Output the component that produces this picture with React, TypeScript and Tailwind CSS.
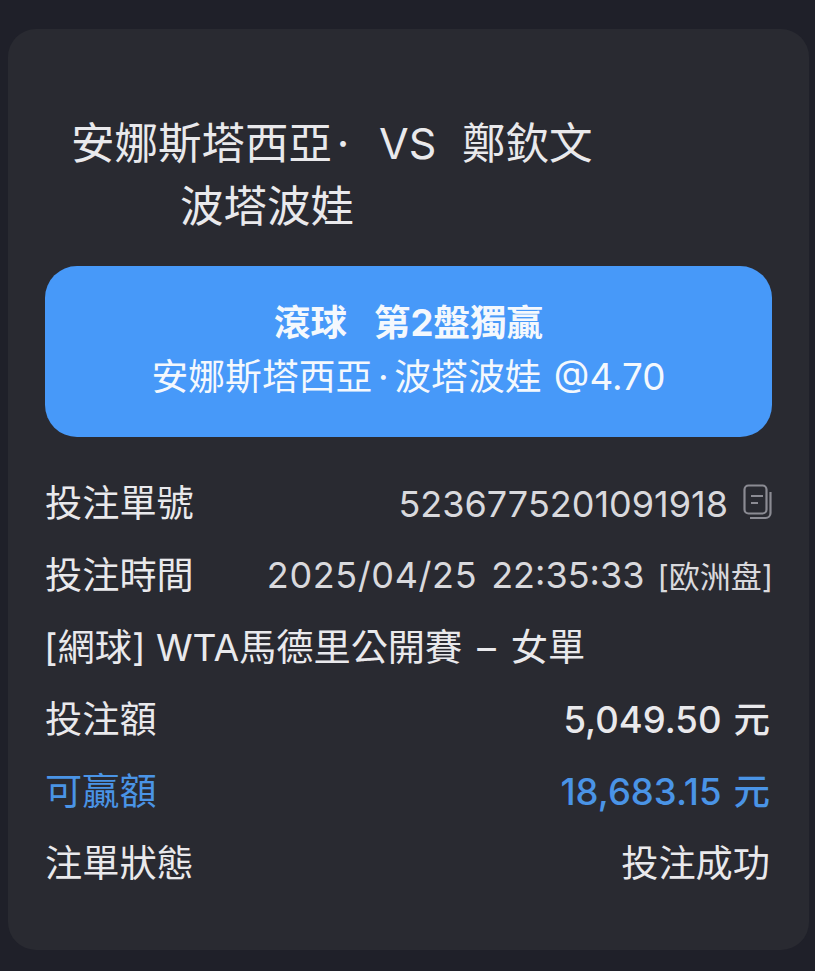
const font = "[font-family:Inter,'Noto_Sans_CJK_TC',sans-serif]";

const rows = [
  { label: "投注額", value: "5,049.50", unit: "元", valueClass: "text-[#e9e9ec]" },
  { label: "可贏額", value: "18,683.15", unit: "元", valueClass: "text-[#4a94e6]", labelClass: "text-[#4a94e6]" },
];

const Dot = () => <span className="inline-block w-[22px] text-center">·</span>;

const App = () => {
  return (
    <div className={`${font} h-[971px] w-[815px] overflow-hidden bg-[#1f2029] pt-[29px] pl-2 pr-[6px]`}>
      <div className="h-[921px] rounded-[28px] bg-[#292a31] px-[37px] pt-[83px] text-[#e9e9ec]">
        {/* Match title */}
        <div className="flex h-[154px] items-start pl-[26px] text-[43.5px] leading-[63px]">
          <div className="w-[283px] text-right whitespace-nowrap">
            安娜斯塔西亞
            <Dot />
            <br />
            波塔波娃
          </div>
          <div className="ml-[25px] w-[56px] text-center text-[43px]">VS</div>
          <div className="ml-[27px]">鄭欽文</div>
        </div>

        {/* Bet pick */}
        <div className="flex h-[171px] flex-col items-center justify-center rounded-[32px] bg-[#4799f9] text-[#f4f8fd]">
          <div className="-mt-[3px] flex gap-[27px] text-[36.5px] leading-[50px] font-bold">
            <span>滾球</span>
            <span>第2盤獨贏</span>
          </div>
          <div className="mt-[3px] text-[36.8px] leading-[52px] whitespace-nowrap">
            安娜斯塔西亞
            <Dot />
            波塔波娃 <span className="ml-[2px]">@4.70</span>
          </div>
        </div>

        {/* Details */}
        <div className="mt-[31px] text-[37.2px] leading-[72px]">
          <div className="flex h-[72px] items-center justify-between">
            <span>投注單號</span>
            <span className="flex items-center gap-[15px]">
              <span className="text-[36px] text-[#d9d9dd]">5236775201091918</span>
              <svg width="29" height="36" viewBox="0 0 29 36" fill="none" stroke="#8b8b93" strokeWidth="2.2" className="mb-1">
                <rect x="1.5" y="1.5" width="22" height="28" rx="4" />
                <path d="M8 12h12M8 19h7" />
                <path d="M27.5 8v21a5 5 0 0 1-5 5H7" />
              </svg>
            </span>
          </div>
          <div className="flex h-[72px] items-center justify-between">
            <span>投注時間</span>
            <span className="-mr-px flex items-baseline text-[36px] text-[#d9d9dd]">
              <span className="tracking-[0.6px]">2025/04/25</span>
              <span className="ml-[14px]">22:35:33</span>
              <span className="ml-[13px] text-[31px]">[欧洲盘]</span>
            </span>
          </div>
          <div className="-ml-px flex h-[72px] items-center whitespace-pre">
            [網球] WTA馬德里公開賽<span className="mx-[15px]">–</span>女單
          </div>
          {rows.map((row) => (
            <div key={row.label} className="flex h-[72px] items-center justify-between">
              <span className={row.labelClass}>{row.label}</span>
              <span className={`${row.valueClass} flex gap-[12px] pr-[2px] text-[36.5px] font-medium`}>
                <span>{row.value}</span>
                <span>{row.unit}</span>
              </span>
            </div>
          ))}
          <div className="flex h-[72px] items-center justify-between">
            <span>注單狀態</span>
            <span className="pr-[2px]">投注成功</span>
          </div>
        </div>
      </div>
    </div>
  );
};

export default App;
